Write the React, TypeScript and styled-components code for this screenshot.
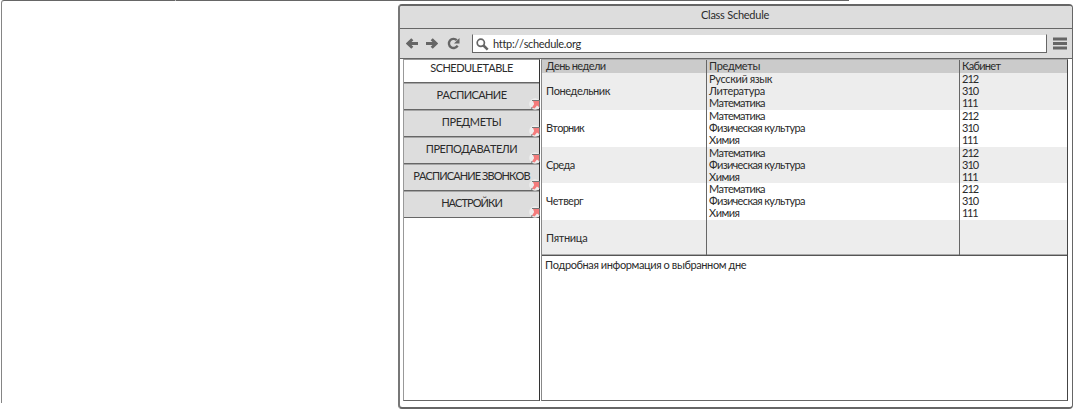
import React from "react";
import styled, { createGlobalStyle } from "styled-components";

const GlobalStyle = createGlobalStyle`
  * { box-sizing: border-box; }
  body {
    margin: 0;
    background: #fff;
    color: #2b2b2b;
    font: 11px/12px "Lato", "Noto Sans", sans-serif;
    font-kerning: none;
    overflow: hidden;
  }
`;

const line = "#666";

const Page = styled.div`
  position: relative;
  display: flex;
  width: 1073px;
  height: 410px;
  padding: 4px 0 0 398px;
`;

const BackFrame = styled.div`
  position: absolute;
  left: 1px;
  top: 0;
  width: 848px;
  height: 403px;
  border-top: 1px solid ${line};
  border-left: 1px solid #858585;
  border-radius: 3px 0 0 0;
`;

const FrameTick = styled.i`
  position: absolute;
  left: 173px;
  top: -1px;
  width: 1px;
  height: 1px;
  background: #bbb;
`;

const Window = styled.div`
  position: relative;
  display: flex;
  flex-direction: column;
  width: 675px;
  height: 405px;
  background: #fff;
  border: 2px solid ${line};
  border-left-color: #777;
  border-right-width: 1px;
  border-radius: 4px;
  overflow: hidden;
`;

const TitleBar = styled.header`
  height: 23px;
  padding: 3px 2px 0 0;
  background: #ddd;
  border-bottom: 1px solid ${line};
  text-align: center;
`;

const Toolbar = styled.div`
  display: flex;
  align-items: center;
  height: 30px;
  padding: 0 5px 0 6px;
  background: #ddd;
  border-bottom: 1px solid ${line};
`;

const Icon = styled.svg<{ $gap: number }>`
  display: block;
  flex: none;
  margin-right: ${(p) => p.$gap}px;
`;

const Address = styled.div`
  display: flex;
  align-items: center;
  width: 575px;
  height: 19px;
  margin-right: 6px;
  padding: 1px 0 0 3px;
  background: #fff;
  border: 1px solid ${line};
  border-top-color: #ddd;
`;

const Content = styled.main`
  display: flex;
  padding: 0 0 0 3px;
`;

const Sidebar = styled.nav`
  width: 137px;
  height: 342px;
  margin-right: 1px;
  border: 1px solid ${line};
  border-left-color: #999;
  border-right-color: #333;
  border-top-color: #999;
`;

const NavItem = styled.div<{ $active?: boolean }>`
  position: relative;
  height: ${(p) => (p.$active ? 23 : 27)}px;
  padding-top: ${(p) => (p.$active ? 2 : 5)}px;
  background: ${(p) => (p.$active ? "#fff" : "#ddd")};
  border-top: ${(p) => (p.$active ? "0" : "1px solid #a5a5a5")};
  border-bottom: 1px solid ${line};
  text-align: center;
  white-space: nowrap;
`;

const LinkMark = styled.svg`
  position: absolute;
  right: -1px;
  bottom: -1px;
`;

const Main = styled.section`
  width: 527px;
  height: 342px;
  border: 1px solid ${line};
  border-left-color: #888;
  border-right-color: #444;
  border-top-color: #aaa;
`;

const Row = styled.div<{ $h: number; $bg: string }>`
  display: grid;
  grid-template-columns: 164px 253px 108px;
  height: ${(p) => p.$h}px;
  background: ${(p) => p.$bg};
`;

const Cell = styled.div<{ $divided?: boolean; $day?: boolean }>`
  display: flex;
  flex-direction: column;
  padding: ${(p) => (p.$day ? "12px 0 0 4px" : "0 0 0 2px")};
  border-left: ${(p) => (p.$divided ? `1px solid ${line}` : "0")};
  white-space: nowrap;
`;

const HeadCell = styled(Cell)<{ $first?: boolean }>`
  padding: 0 0 0 ${(p) => (p.$first ? 4 : 2)}px;
`;

const Details = styled.div`
  padding: 3px;
  border-top: 1px solid #555;
  box-shadow: 0 -1px #aaa;
`;

const Label = styled.span<{ $ls?: number }>`
  display: block;
  letter-spacing: ${(p) => p.$ls ?? 0}px;
`;

const tracking: Record<string, number> = {
  "РАСПИСАНИЕ": -0.6,
  "ПРЕДМЕТЫ": -0.4,
  "ПРЕПОДАВАТЕЛИ": -0.5,
  "РАСПИСАНИЕ ЗВОНКОВ": -0.9,
  "НАСТРОЙКИ": -0.95,
  "Понедельник": -0.45,
  "Вторник": -0.75,
  "Среда": -0.6,
  "Четверг": -0.5,
  "Пятница": -0.35,
  "Русский язык": -0.4,
  "Литература": -0.45,
  "Математика": -0.75,
  "Физическая культура": -0.65,
  "Химия": -0.5,
  "212": -1,
  "310": -1,
  "111": -1.3,
};

const Text = ({ children }: { children: string }) => (
  <Label $ls={tracking[children]}>{children}</Label>
);

const menu = ["РАСПИСАНИЕ", "ПРЕДМЕТЫ", "ПРЕПОДАВАТЕЛИ", "РАСПИСАНИЕ ЗВОНКОВ", "НАСТРОЙКИ"];

const rooms = ["212", "310", "111"];
const common = ["Математика", "Физическая культура", "Химия"];
const days = [
  { day: "Понедельник", subjects: ["Русский язык", "Литература", "Математика"], rooms, h: 37 },
  { day: "Вторник", subjects: common, rooms, h: 37 },
  { day: "Среда", subjects: common, rooms, h: 36 },
  { day: "Четверг", subjects: common, rooms, h: 37 },
  { day: "Пятница", subjects: [], rooms: [], h: 35 },
];

function Arrow({ flip, gap }: { flip?: boolean; gap: number }) {
  return (
    <Icon $gap={gap} width="13" height="12" viewBox="0 0 13 12">
      <path
        d="M6.3 1.2 1.9 5.5l4.4 4.3M2.5 5.5H12"
        transform={flip ? "matrix(-1 0 0 1 13 0)" : undefined}
        fill="none"
        stroke={line}
        strokeWidth="3"
      />
    </Icon>
  );
}

export default function App() {
  return (
    <Page>
      <GlobalStyle />
      <BackFrame><FrameTick /></BackFrame>
      <Window>
        <TitleBar><Label $ls={-0.25}>Class Schedule</Label></TitleBar>
        <Toolbar>
          <Arrow gap={6} />
          <Arrow flip gap={9} />
          <Icon $gap={12} width="13" height="13" viewBox="0 0 13 13">
            <path d="M9.8 3.2A4.6 4.6 0 1 0 10.6 8.6" fill="none" stroke={line} strokeWidth="2.4" />
            <path d="M12.5 1v5.5H7z" fill={line} />
          </Icon>
          <Address>
            <Icon $gap={4} width="13" height="13" viewBox="0 0 13 13">
              <circle cx="4.8" cy="4.8" r="3.6" fill="none" stroke={line} strokeWidth="1.7" />
              <path d="m7.5 7.5 4.2 4.2" stroke={line} strokeWidth="2.5" />
            </Icon>
            <Label $ls={-0.32}>http://schedule.org</Label>
          </Address>
          <Icon $gap={0} width="14" height="13" viewBox="0 0 14 13">
            <path d="M0 2h14M0 6.5h14M0 11h14" stroke={line} strokeWidth="3" />
          </Icon>
        </Toolbar>
        <Content>
          <Sidebar>
            <NavItem $active><Label $ls={-0.55}>SCHEDULETABLE</Label></NavItem>
            {menu.map((m) => (
              <NavItem key={m}>
                <Text>{m}</Text>
                <LinkMark width="11" height="12" viewBox="0 0 11 12">
                  <circle cx="6" cy="6" r="5.8" fill="#eee" />
                  <path d="M4 3h6v6L8 7.6 5.6 10.6 3 9.4 5.2 6z" fill="#f47c7c" />
                  <path d="M3 2.5h7.5M3 9l-.3 2M10.5 2v8" fill="none" stroke="#777" strokeWidth="1" />
                </LinkMark>
              </NavItem>
            ))}
          </Sidebar>
          <Main>
            <Row $h={13} $bg="#cbcbcb">
              <HeadCell $first><Label $ls={-0.6}>День недели</Label></HeadCell>
              <HeadCell $divided><Label $ls={-0.35}>Предметы</Label></HeadCell>
              <HeadCell $divided><Label $ls={-0.7}>Кабинет</Label></HeadCell>
            </Row>
            {days.map((d, i) => (
              <Row key={d.day} $h={d.h} $bg={i % 2 ? "#fff" : "#ededed"}>
                <Cell $day><Text>{d.day}</Text></Cell>
                <Cell $divided>{d.subjects.map((s) => <Text key={s}>{s}</Text>)}</Cell>
                <Cell $divided>{d.rooms.map((r) => <Text key={r}>{r}</Text>)}</Cell>
              </Row>
            ))}
            <Details><Label $ls={-0.4}>Подробная информация о выбранном дне</Label></Details>
          </Main>
        </Content>
      </Window>
    </Page>
  );
}
